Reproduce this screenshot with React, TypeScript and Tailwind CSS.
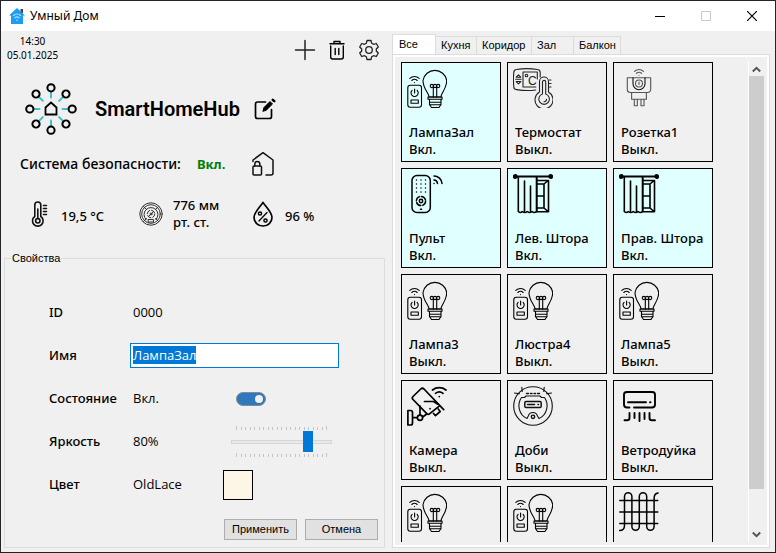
import { useEffect, useRef, type ReactNode } from "react";

function Svg({ size = 40, width = 1.2, color = "#000", children }: { size?: number; width?: number; color?: string; children: ReactNode }) {
  return (
    <svg
      width={size}
      height={size}
      viewBox={`0 0 ${size} ${size}`}
      fill="none"
      stroke={color}
      strokeWidth={width}
      strokeLinecap="round"
      strokeLinejoin="round"
      aria-hidden="true"
      className="shrink-0"
    >
      {children}
    </svg>
  );
}

function LampIcon() {
  return (
    <Svg width={1.1}>
      <path d="M22 29c0-4-6-8-6-16.5A12 12 0 0 1 39.7 12.5C39.7 21 34 25 34 29z" />
      <path d="M21 29h14v2.3H21zM22.5 31.5v5l2 3h7.5l2-3v-5M22.5 34.2h11.5M22.5 36.8h11.5" />
      <path d="M26.3 29v-9.5M29.7 29v-9.5M26.3 19.5h3.4" />
      <circle cx="24.8" cy="18" r="1.6" />
      <circle cx="31.2" cy="18" r="1.6" />
      <circle cx="28" cy="18" r="1.6" />
      <rect x="0.8" y="17.3" width="13.7" height="22" rx="2.5" />
      <path d="M7.6 21v4M5.1 22.3a3.6 3.6 0 1 0 5 0" />
      <path d="M4 32h7.3v3.3H4z" />
      <path d="M2.8 10.3a7 7 0 0 1 9.4 0M4.8 12.5a4 4 0 0 1 5.4 0M7.5 14.5v.1" />
    </Svg>
  );
}

function ThermostatIcon() {
  return (
    <Svg width={1.1} color="#222">
      <path d="M22.8 22c-6 .8-13 .6-19.3-.4A3 3 0 0 1 .8 18.5C.3 13.5.3 8.5.8 4.5A3 3 0 0 1 3.500 1.500C10.500.3 17.500.3 24.500 1.500A3 3 0 0 1 27.200 4.500V9" />
      <path d="M22.8 19H10V4h14.3v7" />
      <path d="M3.2 9.200l2.300-2.400 2.300 2.400zM3.200 13.500l2.300 2.400 2.300-2.400zM2.700 11.300h5.500" />
      <circle cx="13.5" cy="7.5" r="1.3" />
      <text x="15" y="16.500" fontSize="12" fontFamily="Liberation Sans, sans-serif" fill="#222" stroke="none">C</text>
      <path d="M26.500 24V13.500a4.500 4.500 0 0 1 9 0V24a9 9 0 1 1-9 0z" />
      <path d="M29.500 26V14a1.600 1.600 0 0 1 3.200 0v12a5.300 5.300 0 1 1-3.200 0z" />
      <path d="M31 33.800a2.500 2.500 0 0 0 2.500-2.500M36.500 12h1.500M36.500 15.500h1.500M36.500 19h1.500" />
    </Svg>
  );
}

function SocketIcon() {
  return (
    <Svg width={1.1} color="#555">
      <path d="M15.500 3.300a7 7 0 0 1 9 0M17.500 5.300a4 4 0 0 1 5 0M20 7.200v.1" />
      <path d="M8.300 9.700h23.400v11.800a3 3 0 0 1-3 3H11.300a3 3 0 0 1-3-3z" />
      <path d="M14 9.700v6a6 6 0 0 0 12 0v-6" stroke="#111" />
      <circle cx="20" cy="15.500" r="3.500" />
      <path d="M20 14v2.500M12.600 24.500h14.800v6.800H12.600zM15.300 31.300v6.500h3v-6.500M22 31.300v6.500h3v-6.500" />
    </Svg>
  );
}

function RemoteIcon() {
  return (
    <Svg width={1.5}>
      <rect x="5" y="1.500" width="18.300" height="37" rx="5" />
      <path d="M9.500 6v.1M14 6v.1M18.500 6v.1M9.500 10v.1M14 10v.1M18.500 10v.1M9.500 14v.1M14 14v.1M18.500 14v.1M9.500 18v.1M14 18v.1M18.500 18v.1" />
      <circle cx="14" cy="27" r="4.600" strokeDasharray="5.200 2" />
      <circle cx="14" cy="27" r="1.700" />
      <path d="M13.500 35.300h1M27 9.500v-.1M27 6a3.800 3.800 0 0 1 3.500 3.500M27 2a8 8 0 0 1 8 7.500" />
    </Svg>
  );
}

function CurtainIcon() {
  return (
    <Svg width={1.6}>
      <path d="M2 2.500h36" strokeWidth="1.800" />
      <circle cx="2.300" cy="2.500" r="1.600" fill="#000" />
      <circle cx="37.700" cy="2.500" r="1.600" fill="#000" />
      <path d="M5.300 3v34.500q2 2 4 0 2.500 2 5 0 2.300 2 4.700 0 2.300 2 4.500 0V3M11.500 7v30M17.500 12v25" />
      <path d="M24 6.500h11.500v31.200H24M24 10h7v24H24M31 10l4-3.500M31 34l4 3.500M25 22h6M23.800 4v34" />
    </Svg>
  );
}

function CameraIcon() {
  return (
    <Svg width={1.700}>
      <path d="M36.700 23.700L17 3q-1.700-1.500-3.200 0L6 10.500q-1.500 1.500 0 3l14 14.300q1.300 1 2.500 0l10-8" />
      <path d="M17.500 15.500h9l4 2.500M23 22.700h.1M26.500 27.500l2 2.200 4.700-4.200-2-2.500" />
      <path d="M.9 24.500h2.600q2 0 2 2v10.500q0 2-2 2H.9zM6 31.700h4M13 29v-9M15.700 31l4-3" />
      <circle cx="13" cy="31.700" r="2.600" />
      <path d="M25.500 4a11 11 0 0 1 13.500 0M28.500 7.300a6 6 0 0 1 7.500 0M32.300 10.500v.1" />
    </Svg>
  );
}

function RobotIcon() {
  return (
    <Svg width={1.1} color="#111">
      <circle cx="20" cy="20" r="19.300" />
      <path d="M14 32.500A14.200 14.200 0 0 1 8.500 11.500h3l1.500-1.500h14l1.500 1.500h3a14.200 14.200 0 0 1-5.500 21l-1.500-2.500a4.800 4.800 0 0 0-9.200 0z" />
      <path d="M13.500 7.500h2M17.500 7.500h1.500M21 7.500h1.500M24.500 7.500h2" strokeWidth="1.400" />
      <rect x="11.800" y="15.500" width="16.400" height="6" rx="1.300" strokeWidth="1.500" />
      <path d="M14.500 18.500h7M25 18.500h.5" strokeWidth="1.500" />
      <circle cx="20" cy="30.800" r="1.700" strokeWidth="1.400" />
      <path d="M1.500 7l5 .8M8.800 1.200l.4 4.300M38.500 7l-5 .8M31.200 1.200l-.4 4.300" />
    </Svg>
  );
}

function ConditionerIcon() {
  return (
    <Svg width={1.900}>
      <path d="M10.500 21.500H8q-3 0-3-3V8.500q0-2.500 3-2.500h25q3 0 3 2.500v10q0 3-3 3H15M9 16.300h18M31 16.300h.5" />
      <path d="M10.500 27v5q0 2.300-2.500 2.300H5.500M15.500 27v5M20.500 27v8M25.500 27v6M30.500 27v5q0 2.300 2.500 2.300H36" />
    </Svg>
  );
}

function HeatedFloorIcon() {
  return (
    <Svg width={1.500}>
      <path d="M.5 38.500q5 0 5-5V4.500a3.700 3.700 0 0 1 7.400 0v30a3.700 3.700 0 0 0 7.400 0v-30a3.700 3.700 0 0 1 7.400 0v30a3.700 3.700 0 0 0 7.400 0v-28q0-5 4-5.500" />
      <path d="M.8 8.500h38M.8 20h38M.8 31.500h38" />
    </Svg>
  );
}

function HubLogo() {
  const spokes = [0, 45, 90, 135, 180, 225, 270, 315];
  return (
    <Svg size={52} width={2}>
      {spokes.map((angle) => (
        <g key={angle} transform={`rotate(${angle} 26 26)`}>
          <path d="M26 9v5.500" stroke="#35c4c8" />
          <circle cx="26" cy="4.800" r="3.600" />
        </g>
      ))}
      <path d="M20.500 31.500v-7l5.500-5 5.500 5v7z" strokeLinejoin="miter" strokeWidth="1.800" />
    </Svg>
  );
}

function AppIcon() {
  return (
    <svg width="16" height="16" viewBox="0 0 16 16" aria-hidden="true">
      <path d="M11.500 1h2.500v4h-2.500z" fill="#4a4038" />
      <path d="M8 0L0 7.500h2V16h12V7.500h2z" fill="#1e9bf5" />
      <path d="M4.500 7.500a5 5 0 0 1 7 0M6 9.700a3 3 0 0 1 4 0M8 12v.5" fill="none" stroke="#a9dcff" strokeWidth="1.300" strokeLinecap="round" />
    </svg>
  );
}

function PlusIcon() {
  return <Svg size={22} width={1.500} color="#222"><path d="M11 1.500v19M1.500 11h19" /></Svg>;
}

function TrashIcon() {
  return (
    <Svg size={22} width={1.400}>
      <path d="M4.700 7v11q0 2 2 2h8.600q2 0 2-2V7M4 4.700h14M8 4.500V2.500h6v2M9.200 9.500v6M12.800 9.500v6" />
    </Svg>
  );
}

function GearIcon() {
  return (
    <Svg size={22} width={1.300} color="#222">
      <path d="M9 1.500h4l.7 2.800 1.800 1 2.800-.8 2 3.500-2 2v2l2 2-2 3.500-2.800-.8-1.800 1-.7 2.800H9l-.7-2.800-1.800-1-2.800.8-2-3.500 2-2v-2l-2-2 2-3.500 2.800.8 1.800-1z" />
      <circle cx="11" cy="11" r="3.300" />
    </Svg>
  );
}

function EditIcon() {
  return (
    <Svg size={22} width={1.700}>
      <path d="M11.500 4H3.500Q1.500 4 1.500 6v12.500q0 2 2 2h12q2 0 2-2V11.500" />
      <path d="M9 13l1-3.500 6-6 2.500 2.500-6 6z" fill="#000" strokeWidth="1" />
      <path d="M18.800 1.800l1.400 1.400" strokeWidth="2.600" />
    </Svg>
  );
}

function HouseLockIcon() {
  return (
    <Svg size={24} width={1.500} color="#111">
      <path d="M2 9.500V8l10-7.300L22 8v13q0 2-2 2h-5" />
      <rect x="2" y="14" width="8.500" height="9" rx="1" />
      <path d="M3.800 14v-2a2.500 2.500 0 0 1 5 0v2" />
    </Svg>
  );
}

function ThermometerIcon() {
  return (
    <Svg size={26} width={1.600} color="#111">
      <path d="M5.800 15.500V4a3 3 0 0 1 6 0v11.500a5.300 5.300 0 1 1-6 0z" />
      <circle cx="8.800" cy="19.800" r="2.200" />
      <path d="M8.800 8v9.500M14.500 4.500h3M14.500 7.500h3M14.500 10.500h3M14.500 13.500h3" />
    </Svg>
  );
}

function BarometerIcon() {
  return (
    <Svg size={24} width={1} color="#333">
      <circle cx="12" cy="12" r="11.200" />
      <circle cx="12" cy="12" r="9.300" />
      <path d="M7 17.500A7 7 0 1 1 17 17.500M4.500 4.500l3 3M19.500 4.500l-3 3M4.500 19.500l3-3M19.500 19.500l-3-3" />
      <circle cx="12" cy="12" r="3.800" strokeDasharray="4 2" />
      <path d="M10 14l4.500-4.500M9.500 17.500h5v2.500h-5z" />
      <circle cx="12" cy="12" r="1" />
    </Svg>
  );
}

function HumidityIcon() {
  return (
    <Svg size={26} width={1.700}>
      <path d="M13 1.500C9 7 4 11.500 4 16.500a9 8.500 0 0 0 18 0C22 11.500 17 7 13 1.500z" />
      <path d="M17 11.500L9 20" strokeWidth="1.300" />
      <circle cx="10" cy="12.500" r="1.600" strokeWidth="1.500" />
      <circle cx="15.500" cy="19.500" r="1.600" strokeWidth="1.500" />
    </Svg>
  );
}

type Device = { icon: () => ReactNode; name?: string; on?: boolean };

const devices: Device[] = [
  { icon: LampIcon, name: "ЛампаЗал", on: true },
  { icon: ThermostatIcon, name: "Термостат" },
  { icon: SocketIcon, name: "Розетка1" },
  { icon: RemoteIcon, name: "Пульт", on: true },
  { icon: CurtainIcon, name: "Лев. Штора", on: true },
  { icon: CurtainIcon, name: "Прав. Штора", on: true },
  { icon: LampIcon, name: "Лампа3" },
  { icon: LampIcon, name: "Люстра4" },
  { icon: LampIcon, name: "Лампа5" },
  { icon: CameraIcon, name: "Камера" },
  { icon: RobotIcon, name: "Доби" },
  { icon: ConditionerIcon, name: "Ветродуйка" },
  { icon: LampIcon },
  { icon: LampIcon },
  { icon: HeatedFloorIcon },
];

function DeviceTile({ device }: { device: Device }) {
  const Icon = device.icon;
  return (
    <button
      type="button"
      className={`flex h-[100px] flex-col items-start border border-black p-[5px] text-left text-[13px] leading-[17px] font-medium ${device.on ? "bg-[#e0ffff]" : "bg-[#f0f0f0]"}`}
    >
      <Icon />
      {device.name && (
        <span className="mt-4 pl-0.5 whitespace-nowrap">
          {device.name}
          <br />
          {device.on ? "Вкл." : "Выкл."}
        </span>
      )}
    </button>
  );
}

function Ticks() {
  return (
    <div className="flex h-1 items-center justify-between px-[5px]" aria-hidden="true">
      {Array.from({ length: 21 }, (_, i) => (
        <span key={i} className={`w-px bg-[#c4c4c4] ${i === 0 || i === 20 ? "h-1" : "h-[3px]"}`} />
      ))}
    </div>
  );
}

function Row({ label, htmlFor, children }: { label: string; htmlFor?: string; children: ReactNode }) {
  return (
    <div className="grid h-[43px] grid-cols-[84px_1fr] items-center">
      <label htmlFor={htmlFor} className="font-medium">{label}</label>
      <div className="flex items-center font-['Open_Sans',sans-serif]">{children}</div>
    </div>
  );
}

function TitleBar() {
  return (
    <header className="flex h-[30px] shrink-0 items-center bg-white pl-2">
      <AppIcon />
      <h1 className="ml-[5px] flex-1 text-xs">Умный Дом</h1>
      <button type="button" aria-label="Свернуть" className="grid h-full w-[46px] place-items-center">
        <svg width="10" height="10" stroke="#000"><path d="M0 5.500h10" /></svg>
      </button>
      <button type="button" aria-label="Развернуть" disabled className="grid h-full w-[46px] place-items-center">
        <svg width="10" height="10" stroke="#c8c8c8" fill="none"><path d="M.5.5h9v9h-9z" /></svg>
      </button>
      <button type="button" aria-label="Закрыть" className="grid h-full w-[46px] place-items-center">
        <svg width="10" height="10" stroke="#000" strokeWidth="1.200"><path d="M0 0l10 10M10 0L0 10" /></svg>
      </button>
    </header>
  );
}

function Properties() {
  const nameRef = useRef<HTMLInputElement>(null);
  useEffect(() => {
    nameRef.current?.focus();
    nameRef.current?.select();
  }, []);

  return (
    <fieldset className="mx-[3px] mt-[3px] mb-1 flex-1 border border-[#dcdcdc] px-[6px]">
      <legend className="px-px font-['Liberation_Sans',sans-serif] text-[11px] leading-[13px]">Свойства</legend>
      <div className="pt-[26px] pl-[38px] text-[13px]">
        <Row label="ID">0000</Row>
        <Row label="Имя" htmlFor="name">
          <input
            id="name"
            ref={nameRef}
            defaultValue="ЛампаЗал"
            className="-ml-[3px] h-[25px] w-[209px] border border-[#0078d7] bg-white px-0.5 pb-0.5 outline-none selection:bg-[#0078d7] selection:text-white"
          />
        </Row>
        <Row label="Состояние" htmlFor="state">
          <span className="w-[103px]">Вкл.</span>
          <input
            id="state"
            type="checkbox"
            role="switch"
            defaultChecked
            className="flex h-[14px] w-[30px] appearance-none items-center justify-end rounded-full border border-[#8a8a8a] bg-[#2e78be] pr-[2px] before:size-2 before:rounded-full before:bg-[#f0f0f0]"
          />
        </Row>
        <Row label="Яркость" htmlFor="brightness">
          <span className="w-[98px]">80%</span>
          <div className="flex w-[101px] flex-col">
            <Ticks />
            <input
              id="brightness"
              type="range"
              defaultValue={80}
              className="my-px h-[21px] w-full appearance-none bg-transparent [&::-webkit-slider-runnable-track]:h-1 [&::-webkit-slider-runnable-track]:border [&::-webkit-slider-runnable-track]:border-[#d6d6d6] [&::-webkit-slider-runnable-track]:bg-[#e7eaea] [&::-webkit-slider-thumb]:-mt-[10px] [&::-webkit-slider-thumb]:h-[21px] [&::-webkit-slider-thumb]:w-[10px] [&::-webkit-slider-thumb]:appearance-none [&::-webkit-slider-thumb]:bg-[#0078d7]"
            />
            <Ticks />
          </div>
        </Row>
        <Row label="Цвет" htmlFor="colour">
          <span className="w-[90px]">OldLace</span>
          <button id="colour" type="button" aria-label="Цвет" className="size-[30px] border border-black bg-[#fdf5e6]" />
        </Row>
      </div>
      <div className="mt-[13px] flex justify-end gap-2 font-['Liberation_Sans',sans-serif] text-[11px]">
        <button type="button" className="h-[21px] w-[73px] border border-[#adadad] bg-[#e1e1e1]">Применить</button>
        <button type="button" className="h-[21px] w-[73px] border border-[#adadad] bg-[#e1e1e1]">Отмена</button>
      </div>
    </fieldset>
  );
}

function Overview() {
  return (
    <>
      <div className="flex h-[38px] items-center pr-2 pl-[6px]">
        <time className="flex flex-col pb-1 text-center text-[10px] leading-[14px]">
          <span>14:30</span>
          <span>05.01.2025</span>
        </time>
        <div className="ml-auto flex gap-[10px]">
          <button type="button" aria-label="Добавить"><PlusIcon /></button>
          <button type="button" aria-label="Удалить"><TrashIcon /></button>
          <button type="button" aria-label="Настройки"><GearIcon /></button>
        </div>
      </div>
      <div className="flex h-20 items-center pl-6">
        <HubLogo />
        <h2 className="ml-[18px] w-[159px] font-['Roboto',sans-serif] text-[20px] font-semibold">SmartHomeHub</h2>
        <button type="button" aria-label="Переименовать"><EditIcon /></button>
      </div>
      <div className="flex h-[30px] items-center pl-[19px] text-sm font-medium">
        <span className="w-[177px] whitespace-nowrap">Система безопасности:</span>
        <strong className="w-[54px] text-[13px] font-bold text-[#008000]">Вкл.</strong>
        <HouseLockIcon />
      </div>
      <div className="flex h-[70px] items-center pl-[28px] text-[13px] leading-[17px] font-medium">
        <ThermometerIcon />
        <span className="ml-[6px] w-[78px] pt-1">19,5 °C</span>
        <BarometerIcon />
        <span className="ml-[10px] w-[77px]">
          776 мм
          <br />
          рт. ст.
        </span>
        <HumidityIcon />
        <span className="ml-[9px] pt-1">96 %</span>
      </div>
    </>
  );
}

function Tabs() {
  const rest = [
    { name: "Кухня", width: "w-[41px]" },
    { name: "Коридор", width: "w-[55px]" },
    { name: "Зал", width: "w-[42px]" },
    { name: "Балкон", width: "w-[47px]" },
  ];
  return (
    <div role="tablist" className="flex items-end font-['Liberation_Sans',sans-serif] text-[11px]">
      <button type="button" role="tab" aria-selected="true" className="-mb-px h-[21px] w-[44px] border border-b-0 border-[#dcdcdc] bg-white pb-[2px] pl-[6px] text-left">
        Все
      </button>
      {rest.map((tab) => (
        <button key={tab.name} type="button" role="tab" aria-selected="false" className={`h-[18px] border border-b-0 border-l-0 border-[#dcdcdc] pl-[5px] text-left ${tab.width}`}>
          {tab.name}
        </button>
      ))}
    </div>
  );
}

function ScrollBar() {
  return (
    <div className="flex w-4 shrink-0 flex-col items-center border-l border-white" aria-hidden="true">
      <svg width="9" height="15" fill="none" stroke="#555" strokeWidth="2"><path d="M.8 10.500l3.700-3.700 3.700 3.700" /></svg>
      <div className="w-full flex-1">
        <div className="h-[92%] bg-[#cdcdcd]" />
      </div>
      <svg width="9" height="17" fill="none" stroke="#555" strokeWidth="2"><path d="M.8 7.500l3.700 3.700 3.700-3.700" /></svg>
    </div>
  );
}

export default function App() {
  return (
    <div className="flex h-screen flex-col overflow-hidden border border-[#25232a] bg-[#f0f0f0] font-['Noto_Sans','Open_Sans',sans-serif] text-black">
      <TitleBar />
      <main className="flex min-h-0 flex-1">
        <section className="flex w-1/2 shrink-0 flex-col">
          <Overview />
          <Properties />
        </section>
        <section className="ml-1 flex min-w-0 flex-1 flex-col pt-[3px] pr-[5px] pb-1">
          <Tabs />
          <div className="flex min-h-0 flex-1 border border-[#dcdcdc]">
            <div className="flex min-h-0 flex-1 overflow-hidden border-2 border-white pt-1 pr-[3px] pb-[3px]">
              <div className="grid flex-1 grid-cols-[repeat(auto-fill,100px)] content-start gap-1.5 overflow-hidden pt-[1px] pl-[6px]">
                {devices.map((device, i) => (
                  <DeviceTile key={i} device={device} />
                ))}
              </div>
              <ScrollBar />
            </div>
          </div>
        </section>
      </main>
    </div>
  );
}
